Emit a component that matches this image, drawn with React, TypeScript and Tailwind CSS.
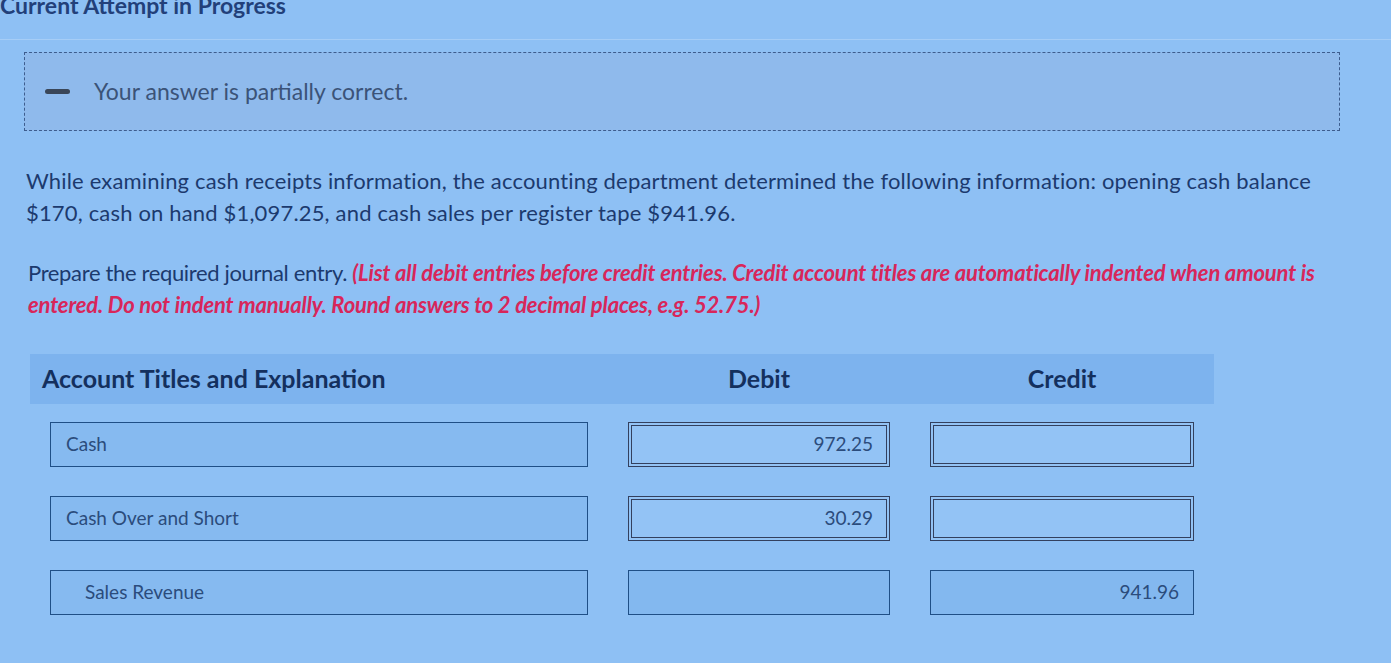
export default function App() {
  const rows = [
    { account: "Cash", indent: false, debit: "972.25", credit: "", marked: true },
    { account: "Cash Over and Short", indent: false, debit: "30.29", credit: "", marked: true },
    { account: "Sales Revenue", indent: true, debit: "", credit: "941.96", marked: false },
  ];

  return (
    <div className="h-[663px] overflow-hidden bg-[#8ec0f4] font-['Lato',sans-serif] text-[#1d3a6c]">
      <div className="flex h-[40px] flex-col border-b border-[#a6cdf6]">
        <h2 className="-mt-[9px] text-[23px] font-bold leading-7 text-[#22407a]">Current Attempt in Progress</h2>
      </div>

      <div className="pl-[24px] pr-[51px]">
        <div className="mt-[12px] flex h-[79px] items-center border border-dashed border-[#3d5d8e] bg-[#8fbaec]">
          <span className="ml-[20px] h-[5px] w-[25px] rounded-sm bg-[#3a4658]" />
          <p className="ml-[24px] text-[23px] text-[#3b5378]">Your answer is partially correct.</p>
        </div>

        <p className="mt-[34px] pl-[2px] text-[22px] leading-8 tracking-[0.17px] text-[#1c3a6e]">
          While examining cash receipts information, the accounting department determined the following information: opening cash balance $170, cash on hand $1,097.25, and cash sales per register tape $941.96.
        </p>

        <p className="mt-[28px] pl-[4px] text-[22px] leading-8 tracking-[-0.35px] text-[#1c3a6e]">
          Prepare the required journal entry.{" "}
          <span className="font-bold italic tracking-[-0.15px] text-[#d8265a]">
            (List all debit entries before credit entries. Credit account titles are automatically indented when amount is entered. Do not indent manually. Round answers to 2 decimal places, e.g. 52.75.)
          </span>
        </p>
      </div>

      <div className="ml-[30px] mt-[33px] w-[1184px]">
        <div className="grid h-[50px] grid-cols-[578px_302px_304px] items-center bg-[#7db3ee] text-[25px] font-bold text-[#14305e]">
          <div className="pl-[12px]">Account Titles and Explanation</div>
          <div className="text-center">Debit</div>
          <div className="text-center">Credit</div>
        </div>

        <div className="mt-[18px] flex flex-col gap-[29px]">
          {rows.map((r) => (
            <div key={r.account} className="grid grid-cols-[578px_302px_304px]">
              <div className="px-[20px]">
                <div
                  className={`flex h-[45px] items-center border-[1.5px] border-[#1f4f86] bg-[#86baf0] text-[19px] text-[#2b4c7c] ${r.indent ? "pl-[34px]" : "pl-[15px]"}`}
                >
                  {r.account}
                </div>
              </div>
              <div className="px-[20px]">
                <div
                  className={`flex h-[45px] items-center justify-end pr-[13px] text-[19px] text-[#2b4c7c] ${
                    r.marked ? "border-[4px] border-double border-[#33405e] bg-[#93c3f5]" : "border-[1.5px] border-[#1f4f86] bg-[#83b8ef]"
                  }`}
                >
                  {r.debit}
                </div>
              </div>
              <div className="px-[20px]">
                <div
                  className={`flex h-[45px] items-center justify-end pr-[14px] text-[19px] text-[#2b4c7c] ${
                    r.marked ? "border-[4px] border-double border-[#33405e] bg-[#93c3f5]" : "border-[1.5px] border-[#1f4f86] bg-[#83b8ef]"
                  }`}
                >
                  {r.credit}
                </div>
              </div>
            </div>
          ))}
        </div>
      </div>
    </div>
  );
}
